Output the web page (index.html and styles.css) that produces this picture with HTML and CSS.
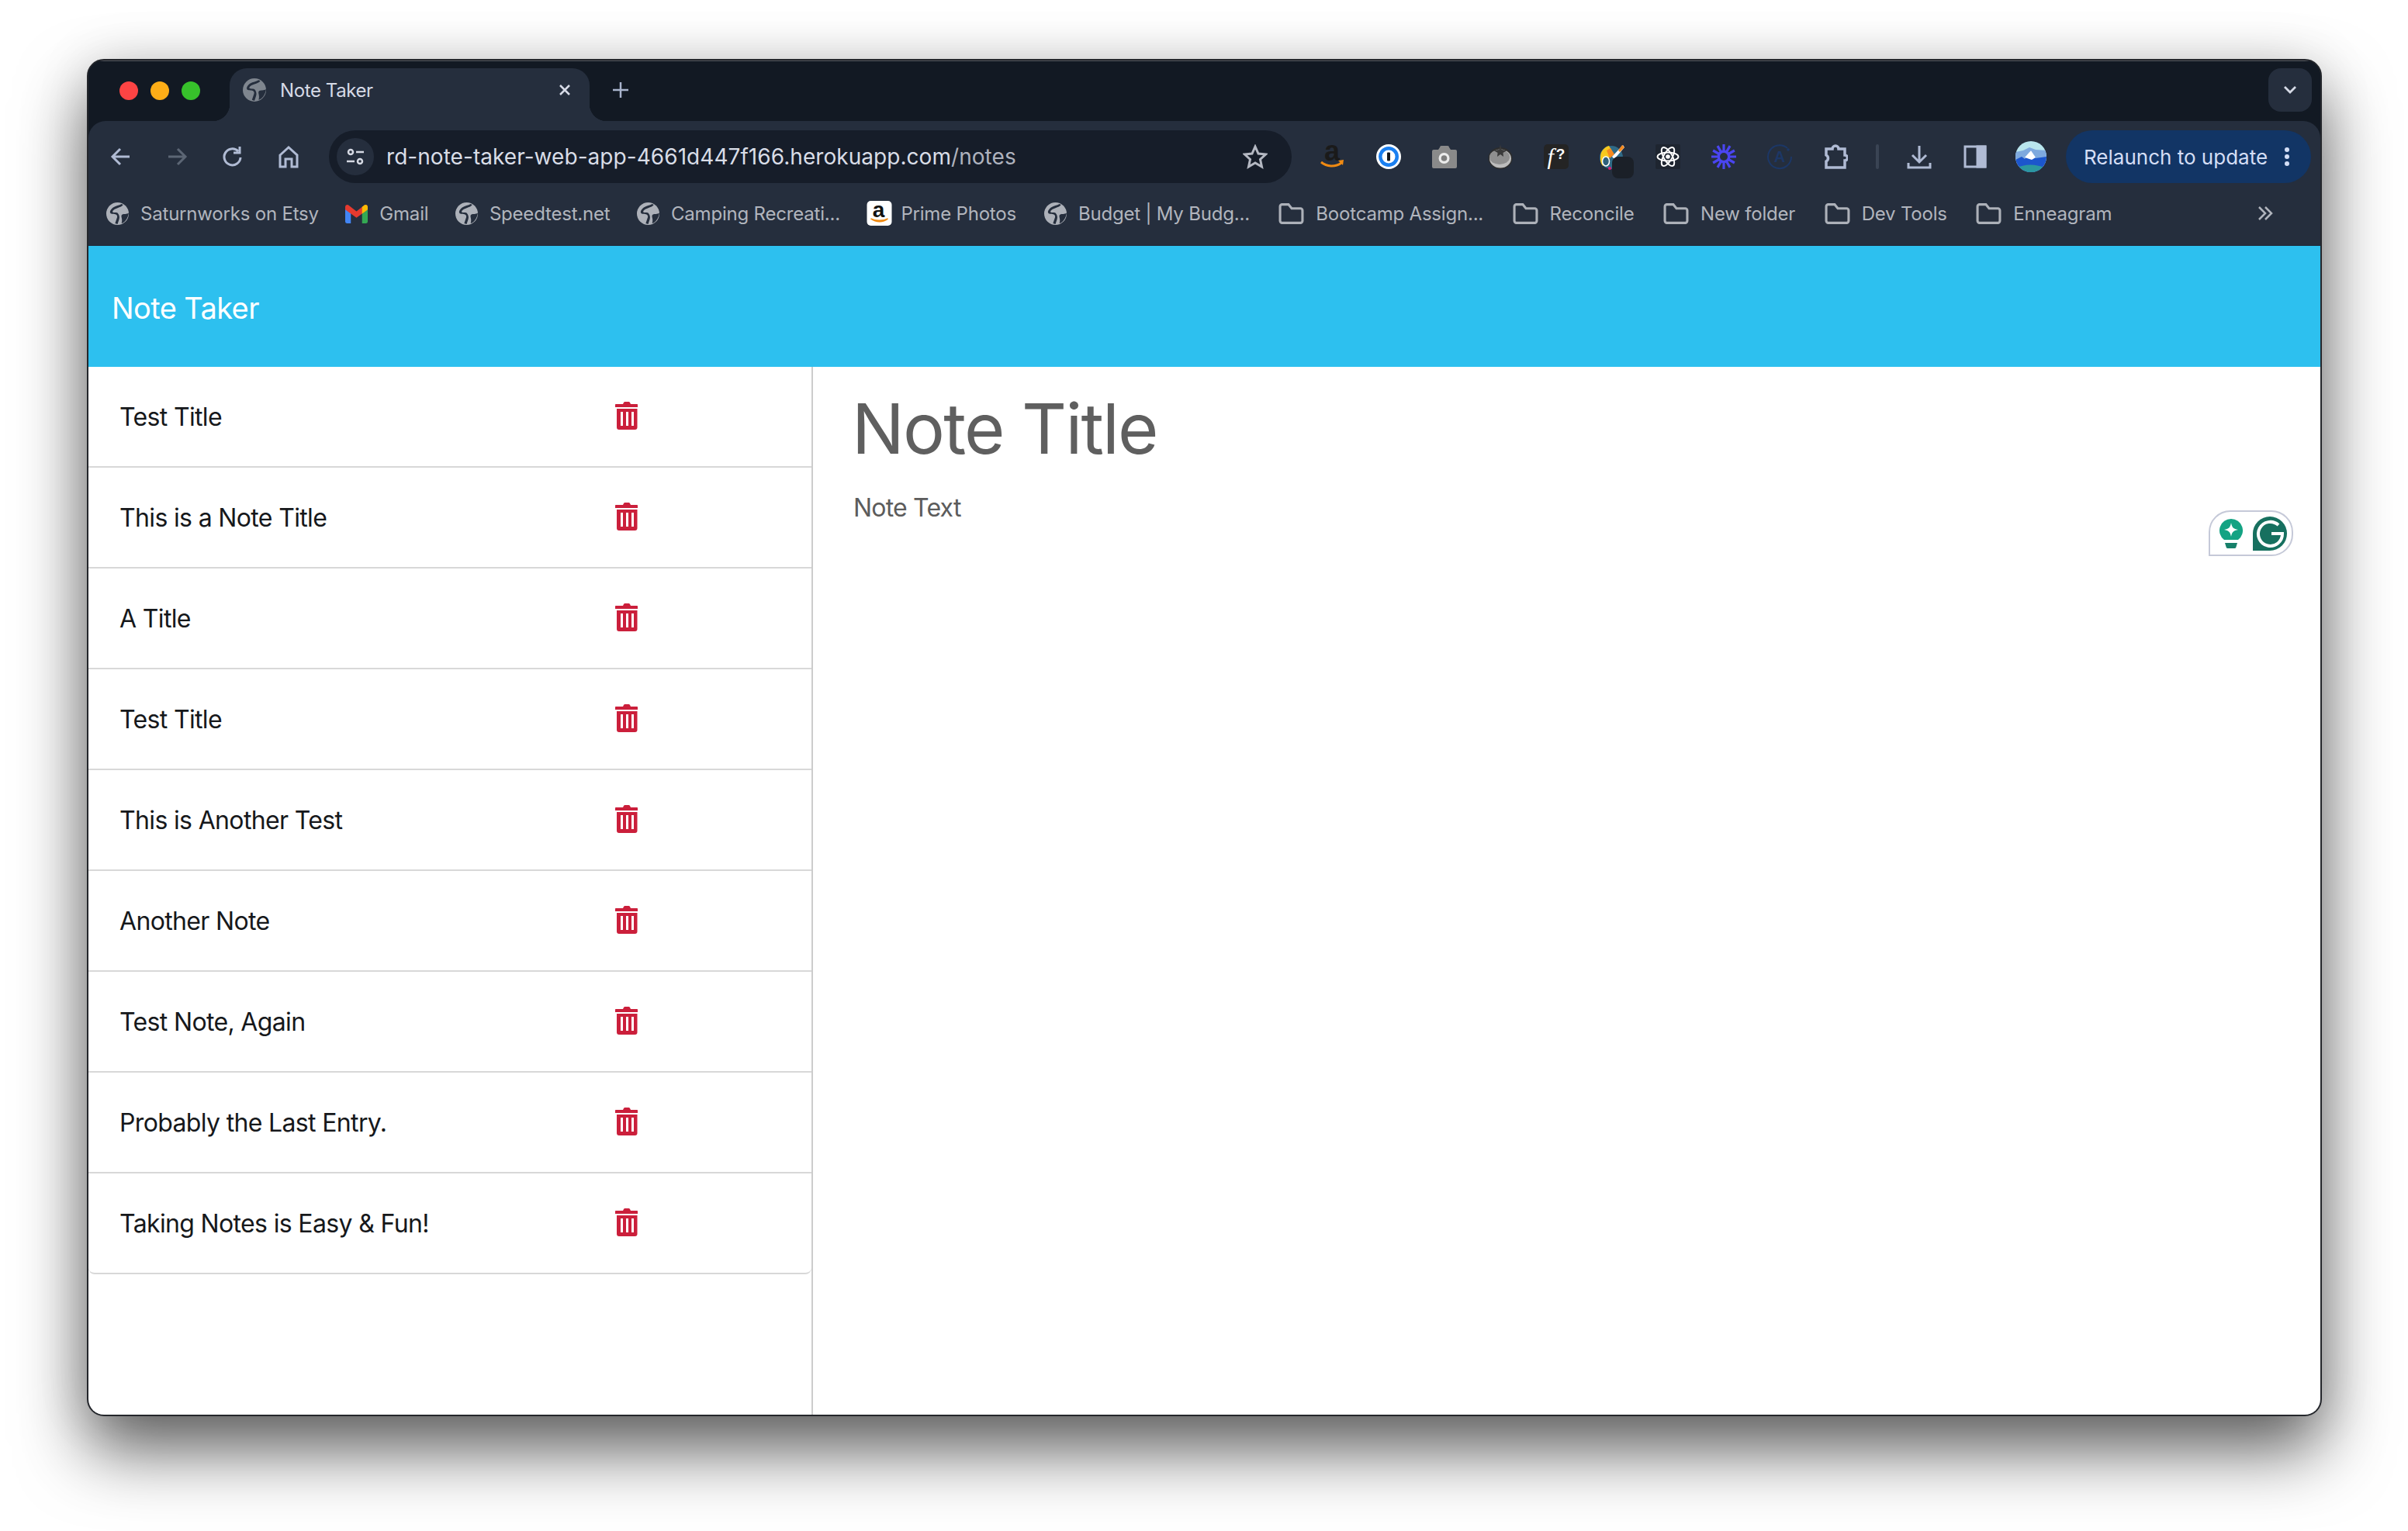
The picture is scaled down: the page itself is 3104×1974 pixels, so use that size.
FILE: index.html
```html
<!DOCTYPE html>
<html lang="en">
<head>
    <meta charset="UTF-8">
    <meta name="viewport" content="width=device-width, initial-scale=1.0">
    <title>Note Taker</title>
    <link rel="stylesheet" href="styles.css">
</head>
<body>

<svg class="defs" width="0" height="0">
    <symbol id="globe" viewBox="0 0 28 28">
        <circle cx="14" cy="14" r="14" fill="currentColor"/>
        <path class="land" d="M19 2c-3 2-7 2-10 4-3 2-5 5-4 7 1 2 5 1 7 2 2 1 2 3 1 5l-2 6 3 1 2-6c1-3 0-6-2-8-2-1-5 0-6-1-1-2 3-4 6-5 3-1 6-2 7-4z"/>
        <path class="land" d="M28 13c-3 2-6 1-8 2-3 2 1 5-1 11 4-1 8-6 9-13z"/>
    </symbol>
    <symbol id="folder" viewBox="0 0 32 28">
        <path d="M2 5.500a2.500 2.500 0 0 1 2.500-2.500h8l4 5h11a2.500 2.500 0 0 1 2.500 2.500v13a2.500 2.500 0 0 1-2.500 2.500h-23a2.500 2.500 0 0 1-2.500-2.500z" fill="none" stroke="currentColor" stroke-width="3"/>
    </symbol>
    <symbol id="trash" viewBox="0 0 30 36">
        <path d="M10 3l1-2c.3-.6 1-1 1.500-1h5c.6 0 1.200.4 1.500 1l1 2h8c.6 0 1 .4 1 1v3H0V4c0-.6.4-1 1-1z"/>
        <path fill-rule="evenodd" d="M2 9h26.500v24a3 3 0 0 1-3 3H5a3 3 0 0 1-3-3zM7 13v18h3V13zm7 0v18h3V13zm7 0v18h3V13z"/>
    </symbol>
</svg>

<div class="window">
    <div class="tabStrip">
        <div class="lights">
            <span class="light red"></span>
            <span class="light amber"></span>
            <span class="light green"></span>
        </div>
        <div class="tab">
            <svg class="tabGlobe"><use href="#globe"/></svg>
            <span class="tabTitle">Note Taker</span>
            <svg class="tabClose" viewBox="0 0 16 16"><path d="M2 2l12 12M14 2L2 14"/></svg>
        </div>
        <svg class="newTab" viewBox="0 0 20 20"><path d="M10 0v20M0 10h20"/></svg>
        <div class="tabSearch">
            <svg viewBox="0 0 18 12"><path d="M2 2l7 7 7-7"/></svg>
        </div>
    </div>

    <div class="toolbar">
        <div class="navRow">
            <div class="slot"><svg class="navIcon" viewBox="0 0 32 32"><path d="M27 16H6M15 6L5 16l10 10"/></svg></div>
            <div class="slot dim"><svg class="navIcon" viewBox="0 0 32 32"><path d="M5 16h21M17 6l10 10-10 10"/></svg></div>
            <div class="slot"><svg class="navIcon" viewBox="0 0 32 32"><path d="M26 17a10.500 10.500 0 1 1-3-8M25 3v8h-8"/></svg></div>
            <div class="slot"><svg class="navIcon" viewBox="0 0 32 32"><path d="M5 14L16 4l11 10v15h-7v-10h-8v10H5z"/></svg></div>

            <div class="omnibox">
                <div class="siteInfo">
                    <svg viewBox="0 0 24 24"><circle cx="6" cy="6" r="3"/><path d="M13 6h10M1 18h10"/><circle cx="18" cy="18" r="3"/></svg>
                </div>
                <span class="url">rd-note-taker-web-app-4661d447f166.herokuapp.com<span class="urlPath">/notes</span></span>
                <svg class="star" viewBox="0 0 32 32"><path d="M16 3l4 9 9.500 1-7 6.500 2 9.500-8.500-5-8.500 5 2-9.500-7-6.500 9.500-1z"/></svg>
            </div>

            <div class="extensions">
                <div class="slot">
                    <svg class="extIcon" viewBox="0 0 32 32">
                        <text class="amazonA" x="15" y="21">a</text>
                        <path d="M1 23c7 6 18 7 26 1" fill="none" stroke="#f08a12" stroke-width="3"/>
                        <path d="M23 21l7-1-1 7z" fill="#f08a12"/>
                    </svg>
                </div>
                <div class="slot">
                    <svg class="extIcon" viewBox="0 0 32 32">
                        <circle cx="16" cy="16" r="16" fill="#fff"/>
                        <circle cx="16" cy="16" r="13" fill="#1a7ff0"/>
                        <circle cx="16" cy="16" r="8.500" fill="#fff"/>
                        <rect x="14" y="10.500" width="4" height="11" rx="1" fill="#16191f"/>
                    </svg>
                </div>
                <div class="slot">
                    <svg class="extIcon" viewBox="0 0 32 32">
                        <path d="M2 7h6l2-3a2 2 0 0 1 2-2h8a2 2 0 0 1 2 2l2 3h6a2 2 0 0 1 2 2v20a2 2 0 0 1-2 2H2a2 2 0 0 1-2-2V9a2 2 0 0 1 2-2z" fill="#8a8a8a"/>
                        <circle cx="15.500" cy="18" r="7" fill="#ececec"/>
                        <circle cx="15.500" cy="18" r="3.800" fill="#7e7e7e"/>
                    </svg>
                </div>
                <div class="slot">
                    <svg class="extIcon" viewBox="0 0 32 32">
                        <ellipse cx="16" cy="18" rx="15.500" ry="14" fill="#2e2e2e"/>
                        <ellipse cx="16" cy="18.500" rx="14" ry="12" fill="#bdbdbd"/>
                        <ellipse cx="15" cy="16.500" rx="13" ry="9.500" fill="#8f8f8f"/>
                        <path d="M16 0l1.500 7 7 1-5 3 .5 5-4-3-4 3 .5-5-5-3 7-1z" fill="#3a3a3a"/>
                    </svg>
                </div>
                <div class="slot">
                    <div class="fxIcon">f<span class="fxMark">?</span></div>
                </div>
                <div class="slot">
                    <div class="paletteWrap">
                        <svg class="extIcon" viewBox="0 0 32 32">
                            <circle cx="15" cy="17" r="15" fill="#2f6a86"/>
                            <path d="M1 17A15 15 0 0 1 12 2l6 10-9 8-5 8A15 15 0 0 1 1 17z" fill="#f7c91e"/>
                            <path d="M9 8l5-3 5 8-6 5z" fill="#f58a1f"/>
                            <path d="M16 16L30 1l2 3-13 15z" fill="#fff"/>
                            <path d="M24 8l5-7 3 3-6 6z" fill="#f58a1f"/>
                            <ellipse cx="8" cy="22" rx="4.500" ry="6" fill="#2f5f7a" stroke="#fff" stroke-width="1.500"/>
                            <circle cx="13" cy="31" r="2" fill="#e01a73"/>
                        </svg>
                        <span class="extBadge"></span>
                    </div>
                </div>
                <div class="slot">
                    <div class="reactIcon">
                        <svg class="extIcon" viewBox="0 0 32 32">
                            <g fill="none" stroke="#fff" stroke-width="1.900">
                                <ellipse cx="16" cy="16" rx="13.500" ry="5.500"/>
                                <ellipse cx="16" cy="16" rx="13.500" ry="5.500" transform="rotate(60 16 16)"/>
                                <ellipse cx="16" cy="16" rx="13.500" ry="5.500" transform="rotate(120 16 16)"/>
                            </g>
                            <circle cx="16" cy="16" r="2.800" fill="#fff"/>
                        </svg>
                    </div>
                </div>
                <div class="slot">
                    <svg class="extIcon" viewBox="0 0 32 32">
                        <path d="M16 0v32M0 16h32M8 2.140l16 27.720M24 2.140L8 29.860M2.140 8l27.720 16M29.860 8L2.140 24" stroke="#4a45f0" stroke-width="3.200"/>
                        <circle cx="16" cy="16" r="8.500" fill="#4a45f0"/>
                        <circle cx="16" cy="16" r="5" fill="#252e3d"/>
                    </svg>
                </div>
                <div class="slot">
                    <svg class="extIcon" viewBox="0 0 32 32">
                        <path d="M26 5A15 15 0 1 0 31 16" fill="none" stroke="#1c3766" stroke-width="2"/>
                        <circle cx="27" cy="7" r="1.800" fill="#1c3766"/>
                        <text class="autoA" x="16" y="23">A</text>
                    </svg>
                </div>
                <div class="slot">
                    <svg class="navIcon puzzle" viewBox="0 0 32 32"><path d="M4 6h8a4 4 0 0 1 8 0h8v8a3.500 3.500 0 0 1 0 7v9H4v-8a4.500 4.500 0 0 0 0-8z"/></svg>
                </div>
                <div class="separator"></div>
                <div class="slot">
                    <svg class="navIcon" viewBox="0 0 32 32"><path d="M16 2v20M7 14l9 9 9-9M2 24v6h28v-6"/></svg>
                </div>
                <div class="slot">
                    <svg class="navIcon" viewBox="0 0 32 32"><path d="M3 3h26v26H3z"/><path class="panelFill" d="M19 3h10v26H19z"/></svg>
                </div>
                <div class="slot">
                    <svg class="avatar" viewBox="0 0 40 40">
                        <defs><clipPath id="avatarClip"><circle cx="20" cy="20" r="20"/></clipPath></defs>
                        <g clip-path="url(#avatarClip)">
                            <rect width="40" height="40" fill="#b9e6ee"/>
                            <path d="M0 14l10-2 8-4 8 3 14 1v22H0z" fill="#7ea9de"/>
                            <path d="M0 24l8-4 4 3 8-11 6 10 14-2v20H0z" fill="#1c56cc"/>
                            <path d="M12 21l8-9 6 9-5 3z" fill="#fff"/>
                            <path d="M0 35c12-6 26-6 40 0v5H0z" fill="#2b97a0"/>
                        </g>
                    </svg>
                </div>
            </div>

            <div class="relaunch">
                <span>Relaunch to update</span>
                <svg viewBox="0 0 6 24"><circle cx="3" cy="3" r="3"/><circle cx="3" cy="12" r="3"/><circle cx="3" cy="21" r="3"/></svg>
            </div>
        </div>

        <div class="bookmarks">
            <div class="bookmark"><svg class="bmIcon"><use href="#globe"/></svg><span>Saturnworks on Etsy</span></div>
            <div class="bookmark">
                <svg class="bmIcon" viewBox="0 0 28 28">
                    <path d="M0 8v16a2 2 0 0 0 2 2h5V12z" fill="#4285f4"/>
                    <path d="M28 8v16a2 2 0 0 1-2 2h-5V12z" fill="#34a853"/>
                    <path d="M0 9V6c0-3 3-4 5-2l9 7 9-7c2-2 5-1 5 2v3l-14 10z" fill="#e53a2f"/>
                    <path d="M21 5.500l2-1.500c2-2 5-1 5 2v3l-7 5z" fill="#fbbc04"/>
                </svg>
                <span>Gmail</span>
            </div>
            <div class="bookmark"><svg class="bmIcon"><use href="#globe"/></svg><span>Speedtest.net</span></div>
            <div class="bookmark"><svg class="bmIcon"><use href="#globe"/></svg><span>Camping Recreati...</span></div>
            <div class="bookmark prime">
                <svg class="bmIcon wide" viewBox="0 0 32 32">
                    <rect width="32" height="32" rx="5" fill="#fff"/>
                    <text class="amazonB" x="15" y="21">a</text>
                    <path d="M5 23c7 5 16 5 22 0-6 3-16 3-22 0z" fill="#f08a12" stroke="#f08a12" stroke-width="1.500"/>
                </svg>
                <span>Prime Photos</span>
            </div>
            <div class="bookmark wideGap"><svg class="bmIcon"><use href="#globe"/></svg><span>Budget | My Budg...</span></div>
            <div class="bookmark wideGap"><svg class="bmIcon wide"><use href="#folder"/></svg><span>Bootcamp Assign...</span></div>
            <div class="bookmark wideGap"><svg class="bmIcon wide"><use href="#folder"/></svg><span>Reconcile</span></div>
            <div class="bookmark wideGap"><svg class="bmIcon wide"><use href="#folder"/></svg><span>New folder</span></div>
            <div class="bookmark wideGap"><svg class="bmIcon wide"><use href="#folder"/></svg><span>Dev Tools</span></div>
            <div class="bookmark"><svg class="bmIcon wide"><use href="#folder"/></svg><span>Enneagram</span></div>
            <svg class="moreBookmarks" viewBox="0 0 20 20"><path d="M2 2l8 8-8 8M10 2l8 8-8 8"/></svg>
        </div>
    </div>

    <div class="page">
        <header class="pageHeader">Note Taker</header>
        <div class="pageBody">
            <div class="noteList">
                <div class="noteRow"><span class="noteName">Test Title</span><svg class="trash"><use href="#trash"/></svg></div>
                <div class="noteRow"><span class="noteName">This is a Note Title</span><svg class="trash"><use href="#trash"/></svg></div>
                <div class="noteRow"><span class="noteName">A Title</span><svg class="trash"><use href="#trash"/></svg></div>
                <div class="noteRow"><span class="noteName">Test Title</span><svg class="trash"><use href="#trash"/></svg></div>
                <div class="noteRow"><span class="noteName">This is Another Test</span><svg class="trash"><use href="#trash"/></svg></div>
                <div class="noteRow"><span class="noteName">Another Note</span><svg class="trash"><use href="#trash"/></svg></div>
                <div class="noteRow"><span class="noteName">Test Note, Again</span><svg class="trash"><use href="#trash"/></svg></div>
                <div class="noteRow"><span class="noteName">Probably the Last Entry.</span><svg class="trash"><use href="#trash"/></svg></div>
                <div class="noteRow"><span class="noteName">Taking Notes is Easy &amp; Fun!</span><svg class="trash"><use href="#trash"/></svg></div>
            </div>
            <div class="noteEditor">
                <div class="noteTitle">Note Title</div>
                <div class="noteText">Note Text</div>
                <div class="grammarly">
                    <svg class="bulb" viewBox="0 0 30 38">
                        <path d="M15 0a15 15 0 0 1 9 27H6A15 15 0 0 1 15 0z" fill="#14a383"/>
                        <path d="M7 31h16l-1.500 5a2 2 0 0 1-2 2h-9a2 2 0 0 1-2-2z" fill="#17806a"/>
                        <path d="M15 5c1 6 3 8 9 9-6 1-8 3-9 9-1-6-3-8-9-9 6-1 8-3 9-9z" fill="#fff"/>
                    </svg>
                    <svg class="gLogo" viewBox="0 0 44 44">
                        <path d="M0 22a22 22 0 1 1 22 22H0z" fill="#17705f"/>
                        <path d="M33 11a15.500 15.500 0 1 0 5 11H24" fill="none" stroke="#fff" stroke-width="4"/>
                    </svg>
                </div>
            </div>
        </div>
    </div>
</div>

</body>
</html>
```

FILE: styles.css
```css
html, body {
    margin: 0;
    height: 100%;
    overflow: hidden;
}
body {
    background-color: #fff;
    font-family: Inter, "Liberation Sans", sans-serif;
}
.defs {
    position: absolute;
}
.land {
    fill: #252e3d;
}
.window {
    box-sizing: border-box;
    display: flex;
    flex-direction: column;
    width: 2881px;
    height: 1750px;
    margin: 76px 0 0 112px;
    border: 2px solid #24262b;
    border-radius: 22px;
    overflow: hidden;
    background-color: #121923;
    box-shadow: 0 44px 88px rgba(0, 0, 0, 0.62), 0 0 70px rgba(0, 0, 0, 0.1);
}

/* tabs */
.tabStrip {
    display: flex;
    align-items: flex-start;
    height: 78px;
    box-sizing: border-box;
    padding-top: 10px;
    background-color: #121923;
    box-shadow: inset 0 1px 0 #50545c;
}
.lights {
    display: flex;
    gap: 16px;
    margin: 17px 38px 0 40px;
}
.light {
    width: 24px;
    height: 24px;
    border-radius: 50%;
}
.red { background-color: #fd4444; }
.amber { background-color: #fdad17; }
.green { background-color: #37c12b; }
.tab {
    position: relative;
    display: flex;
    align-items: center;
    box-sizing: border-box;
    width: 464px;
    height: 68px;
    padding: 0 24px 12px 17px;
    background-color: #252e3d;
    border-radius: 22px 22px 0 0;
    color: #d6dae6;
    font-size: 24px;
    letter-spacing: -0.4px;
}
.tab::before,
.tab::after {
    content: "";
    position: absolute;
    bottom: 0;
    width: 22px;
    height: 22px;
}
.tab::before {
    left: -22px;
    background: radial-gradient(circle at 0 0, transparent 22px, #252e3d 22.500px);
}
.tab::after {
    right: -22px;
    background: radial-gradient(circle at 100% 0, transparent 22px, #252e3d 22.500px);
}
.tabGlobe {
    width: 30px;
    height: 30px;
    margin-right: 18px;
    color: #7f868f;
}
.tabClose {
    width: 16px;
    height: 16px;
    margin-left: auto;
    fill: none;
    stroke: #d6dae6;
    stroke-width: 2.500;
}
.newTab {
    width: 20px;
    height: 20px;
    margin: 18px 0 0 30px;
    fill: none;
    stroke: #a9b4cc;
    stroke-width: 2.500;
}
.tabSearch {
    display: flex;
    align-items: center;
    justify-content: center;
    width: 56px;
    height: 56px;
    margin: 0 11px 0 auto;
    border-radius: 16px;
    background-color: #252e3d;
}
.tabSearch svg {
    width: 18px;
    height: 12px;
    fill: none;
    stroke: #d6dae6;
    stroke-width: 2.800;
}

/* toolbar */
.toolbar {
    position: relative;
    height: 161px;
    box-sizing: border-box;
    background-color: #252e3d;
    border-radius: 22px 22px 0 0;
    border-bottom: 1px solid #1e2634;
    flex-shrink: 0;
}
.navRow {
    display: flex;
    align-items: center;
    height: 68px;
    padding: 12px 12px 0 6px;
}
.slot {
    display: flex;
    align-items: center;
    justify-content: center;
    width: 72px;
    height: 68px;
    flex-shrink: 0;
}
.navIcon {
    width: 32px;
    height: 32px;
    fill: none;
    stroke: #b0bbd4;
    stroke-width: 3;
}
.dim .navIcon {
    stroke: #5c6675;
}
.puzzle {
    height: 36px;
    stroke-width: 3.500;
}
.panelFill {
    fill: #b0bbd4;
}
.omnibox {
    display: flex;
    align-items: center;
    box-sizing: border-box;
    width: 1241px;
    height: 68px;
    margin: 0 17px 0 16px;
    padding: 0 31px 0 10px;
    border-radius: 34px;
    background-color: #161d29;
}
.siteInfo {
    display: flex;
    align-items: center;
    justify-content: center;
    width: 48px;
    height: 48px;
    margin-right: 16px;
    border-radius: 50%;
    background-color: #252e3d;
}
.siteInfo svg {
    width: 24px;
    height: 24px;
    fill: none;
    stroke: #d5d9e3;
    stroke-width: 2.500;
}
.url {
    color: #d9dde7;
    font-size: 28px;
    letter-spacing: 0.05px;
}
.urlPath {
    color: #aeb2bd;
}
.star {
    width: 32px;
    height: 32px;
    margin-left: auto;
    fill: none;
    stroke: #b4b8c2;
    stroke-width: 3;
}
.extensions {
    display: flex;
    align-items: center;
}
.extIcon {
    display: block;
    width: 32px;
    height: 32px;
    overflow: visible;
}
.amazonA {
    font-family: "Liberation Sans", sans-serif;
    font-size: 36px;
    font-weight: 700;
    text-anchor: middle;
    fill: #1a1a1a;
}
.amazonB {
    font-family: "Liberation Sans", sans-serif;
    font-size: 28px;
    font-weight: 700;
    text-anchor: middle;
    fill: #111;
}
.autoA {
    font-family: "Liberation Sans", sans-serif;
    font-size: 20px;
    font-weight: 700;
    text-anchor: middle;
    fill: #1c3766;
}
.fxIcon {
    display: flex;
    align-items: center;
    justify-content: center;
    width: 32px;
    height: 32px;
    border-radius: 5px;
    background-color: #242424;
    color: #fff;
    font-family: "Liberation Serif", serif;
    font-size: 30px;
    font-style: italic;
    line-height: 32px;
}
.fxMark {
    margin: -6px 0 0 3px;
    font-family: "Liberation Sans", sans-serif;
    font-size: 19px;
    font-style: normal;
    font-weight: 700;
}
.paletteWrap {
    position: relative;
    width: 32px;
    height: 32px;
}
.extBadge {
    position: absolute;
    left: 16px;
    top: 16px;
    width: 28px;
    height: 28px;
    border-radius: 8px;
    background-color: #1b2028;
}
.reactIcon {
    background-color: #1e2530;
    border-radius: 2px;
}
.separator {
    width: 4px;
    height: 32px;
    margin: 0 16px;
    border-radius: 2px;
    background-color: #3a4454;
}
.avatar {
    width: 40px;
    height: 40px;
}
.relaunch {
    display: flex;
    align-items: center;
    justify-content: space-between;
    box-sizing: border-box;
    width: 316px;
    height: 68px;
    margin-left: 9px;
    padding: 0 28px 0 23px;
    border-radius: 34px;
    background-color: #123565;
    color: #d4def5;
    font-size: 26px;
}
.relaunch svg {
    width: 6px;
    height: 24px;
    fill: #d4def5;
}

/* bookmarks */
.bookmarks {
    display: flex;
    align-items: center;
    height: 56px;
    margin-top: 11px;
    padding-left: 23px;
    color: #b1b5bd;
    font-size: 24px;
    letter-spacing: -0.2px;
}
.bookmark {
    display: flex;
    align-items: center;
    gap: 15px;
    margin-right: 34.500px;
    white-space: nowrap;
}
.prime {
    gap: 11px;
    margin-right: 36px;
}
.wideGap {
    margin-right: 37.500px;
}
.bmIcon {
    width: 29px;
    height: 29px;
    color: #adb1b9;
    flex-shrink: 0;
}
.bmIcon.wide {
    width: 33px;
    height: 32px;
    overflow: visible;
}
.moreBookmarks {
    width: 20px;
    height: 20px;
    margin-left: auto;
    margin-right: 61px;
    fill: none;
    stroke: #b1b5bd;
    stroke-width: 2.500;
}

/* page */
.page {
    display: flex;
    flex-direction: column;
    flex: 1;
    min-height: 0;
    background-color: #fff;
}
.pageHeader {
    display: flex;
    align-items: center;
    box-sizing: border-box;
    height: 156px;
    padding: 3px 0 0 30px;
    background-color: #2dc0ef;
    color: #fff;
    font-size: 38px;
    letter-spacing: -0.6px;
    flex-shrink: 0;
}
.pageBody {
    position: relative;
    display: flex;
    flex: 1;
    min-height: 0;
}
.noteList {
    box-sizing: border-box;
    width: 934px;
    border-right: 2px solid #cccccc;
    flex-shrink: 0;
}
.noteRow {
    display: flex;
    align-items: center;
    box-sizing: border-box;
    height: 130px;
    padding-left: 40px;
    border-bottom: 2px solid #d8d8d8;
    color: #16181b;
    font-size: 32px;
    letter-spacing: -0.65px;
}
.noteRow:last-child {
    border-radius: 0 0 8px 8px;
}
.noteName {
    width: 639px;
    flex-shrink: 0;
}
.trash {
    width: 30px;
    height: 36px;
    fill: #cb1f3b;
    margin-top: -3px;
}
.noteEditor {
    flex: 1;
    padding: 26px 0 0 52px;
}
.noteTitle {
    margin-left: -2px;
    color: #5f5f5f;
    font-size: 90px;
    letter-spacing: -1.8px;
    line-height: 108px;
}
.noteText {
    margin-top: 24px;
    color: #5c5c5c;
    font-size: 32px;
    letter-spacing: -0.8px;
    line-height: 48px;
}
.grammarly {
    position: absolute;
    right: 35px;
    top: 185px;
    display: flex;
    align-items: center;
    box-sizing: border-box;
    width: 109px;
    height: 59px;
    padding: 0 8px 0 12px;
    gap: 13px;
    border: 2px solid #c5c9d8;
    border-radius: 28px 28px 28px 0;
    background-color: #fff;
}
.bulb {
    width: 30px;
    height: 38px;
    flex-shrink: 0;
}
.gLogo {
    width: 44px;
    height: 44px;
    flex-shrink: 0;
}
```
